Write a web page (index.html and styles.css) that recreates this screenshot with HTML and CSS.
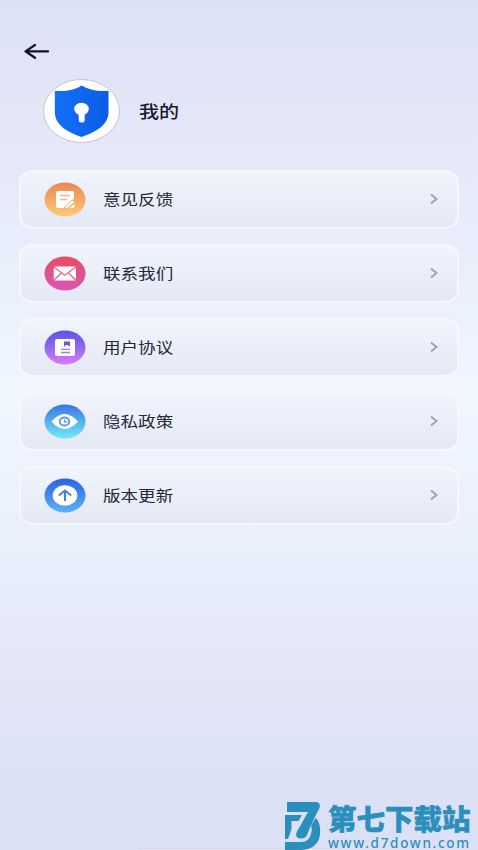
FILE: index.html
```html
<!DOCTYPE html>
<html lang="zh-CN">
<head>
<meta charset="utf-8">
<title>我的</title>
<link rel="stylesheet" href="styles.css">
</head>
<body>
<main class="screen">
  <header class="topbar">
    <svg class="back" width="28" height="18" viewBox="0 0 28 18"><path d="M26 9.4H4M13 3L3.5 9.4L13 15.8" fill="none" stroke="#101328" stroke-width="2.3" stroke-linecap="round" stroke-linejoin="round"/></svg>
  </header>
  <section class="profile">
    <svg class="avatar" width="78" height="65" viewBox="0 0 78 65">
      <defs><linearGradient id="shield" x2="1" y2="0"><stop offset="0" stop-color="#126ff8"/><stop offset="1" stop-color="#0c5de5"/></linearGradient></defs>
      <ellipse cx="38.5" cy="33" rx="38" ry="31.5" fill="#fff" stroke="#c5c7d0"/>
      <path d="M38.5 7.5C31 12.5 22 13.5 11.8 12.7V34C12 47 24 54 38.5 59C53 54 65.5 47 65.5 34V12.7C56 13.5 47 12.5 38.5 7.5Z" fill="url(#shield)"/>
      <ellipse cx="38.5" cy="31" rx="7.3" ry="6.2" fill="#fff"/>
      <rect x="35.7" y="33" width="6" height="11.5" rx="2.5" fill="#fff"/>
    </svg>
    <h1 class="name">我的</h1>
  </section>
  <nav class="menu">
    <a class="item">
      <svg class="icon" width="42" height="35" viewBox="0 0 42 35">
        <defs><linearGradient id="g1" x2="0" y2="1"><stop stop-color="#ec8850"/><stop offset="1" stop-color="#fbca79"/></linearGradient></defs>
        <ellipse cx="21" cy="17.5" rx="20.5" ry="17" fill="url(#g1)"/>
        <path d="M14 9H28Q30 9 30 11V16.5L20 26H14Q12 26 12 24V11Q12 9 14 9Z" fill="#fff"/>
        <path d="M16 13.5H26M16 17.5H23" stroke="#f5b486" stroke-width="1.3"/>
        <path d="M20.5 24.8L28 18L30.8 20L23.5 26.2H20.5Z" fill="#fff" stroke="#f5ae68" stroke-width=".9"/>
        <path d="M25.2 26.2L30.5 21.8V24.2Q30.5 26.2 28.5 26.2Z" fill="#fff"/>
      </svg>
      <span class="label">意见反馈</span>
      <svg class="chevron" width="10" height="14" viewBox="0 0 10 14"><path d="M2 2.5L7.5 7L2 11.5" /></svg>
    </a>
    <a class="item">
      <svg class="icon" width="42" height="35" viewBox="0 0 42 35">
        <defs><linearGradient id="g2" x2="0" y2="1"><stop stop-color="#e64e60"/><stop offset="1" stop-color="#da55b8"/></linearGradient></defs>
        <ellipse cx="21" cy="17.5" rx="20.5" ry="17" fill="url(#g2)"/>
        <rect x="9.7" y="10.5" width="22.3" height="14" rx="1.5" fill="#fff"/>
        <path d="M10 11L20.8 19.4L31.7 11M10 24L17.3 17M31.7 24L24.4 17" fill="none" stroke="#dc607f" stroke-width="1.1"/>
      </svg>
      <span class="label">联系我们</span>
      <svg class="chevron" width="10" height="14" viewBox="0 0 10 14"><path d="M2 2.5L7.5 7L2 11.5" /></svg>
    </a>
    <a class="item">
      <svg class="icon" width="42" height="35" viewBox="0 0 42 35">
        <defs><linearGradient id="g3" x2="0" y2="1"><stop stop-color="#5954e6"/><stop offset=".5" stop-color="#9169ef"/><stop offset="1" stop-color="#dd7bf7"/></linearGradient></defs>
        <ellipse cx="21" cy="17.5" rx="20.5" ry="17" fill="url(#g3)"/>
        <rect x="11" y="9" width="20" height="17" rx="2" fill="#fff"/>
        <path d="M20 11.5H26V16.5L23 14.8L20 16.5Z" fill="#6857d8"/>
        <path d="M17 19.3H26M17 22.5H26" stroke="#a77ce9" stroke-width="1.3"/>
      </svg>
      <span class="label">用户协议</span>
      <svg class="chevron" width="10" height="14" viewBox="0 0 10 14"><path d="M2 2.5L7.5 7L2 11.5" /></svg>
    </a>
    <a class="item">
      <svg class="icon" width="42" height="35" viewBox="0 0 42 35">
        <defs><linearGradient id="g4" x2="0" y2="1"><stop stop-color="#3b75e2"/><stop offset="1" stop-color="#72e9fa"/></linearGradient></defs>
        <ellipse cx="21" cy="17.5" rx="20.5" ry="17" fill="url(#g4)"/>
        <path d="M7.5 17.5Q14 10 20.5 10Q27.5 10 34 17.5Q27.5 25 20.5 25Q14 25 7.5 17.5Z" fill="#fff"/>
        <ellipse cx="20.5" cy="17.5" rx="4.8" ry="4" fill="#fff" stroke="#4f9cdb" stroke-width="1.8"/>
        <path d="M20.5 15.5V17.8H23.5" fill="none" stroke="#4f9cdb" stroke-width="1.2"/>
      </svg>
      <span class="label">隐私政策</span>
      <svg class="chevron" width="10" height="14" viewBox="0 0 10 14"><path d="M2 2.5L7.5 7L2 11.5" /></svg>
    </a>
    <a class="item">
      <svg class="icon" width="42" height="35" viewBox="0 0 42 35">
        <defs><linearGradient id="g5" x2="0" y2="1"><stop stop-color="#2864e4"/><stop offset="1" stop-color="#5bb2f8"/></linearGradient></defs>
        <ellipse cx="21" cy="17.5" rx="20.5" ry="17" fill="url(#g5)"/>
        <ellipse cx="21" cy="17.5" rx="12.3" ry="10.2" fill="#fff"/>
        <path d="M21 23V12.8M14.8 17.5L21 12.5L27.2 17.5" fill="none" stroke="#437fd9" stroke-width="2"/>
      </svg>
      <span class="label">版本更新</span>
      <svg class="chevron" width="10" height="14" viewBox="0 0 10 14"><path d="M2 2.5L7.5 7L2 11.5" /></svg>
    </a>
  </nav>
  <div class="home-strip"></div>
  <aside class="watermark">
    <svg class="mark" width="36" height="49" viewBox="0 0 36 49">
      <path d="M2 1H31Q36 1 34.5 7C31 14 26 23 22.5 33Q20 39 13 37C10 35 11 31 14 27L23 11H2Z" fill="#2b8fbe"/>
      <path d="M0 14H17L13.5 20H6.5V28L3 38H0Z" fill="#2b8fbe"/>
      <path d="M30.5 17C36 21 36 33 34 38C31 45 25 49 16 49H0V41H16C21 41 25 38 26 33C27 29 27 27 26 25Z" fill="#2b8fbe"/>
    </svg>
    <div class="brand">
      <span class="brand-name">第七下载站</span>
      <span class="brand-url">www.d7down.com</span>
    </div>
  </aside>
</main>
</body>
</html>
```
FILE: styles.css
```css
* { box-sizing: border-box; }

body {
  margin: 0;
  font-family: "Noto Sans CJK SC", sans-serif;
  color: #25283a;
}

.screen {
  position: relative;
  height: 850px;
  overflow: hidden;
  padding: 42px 19px 0;
  background: linear-gradient(180deg, #dde1f5 0, #e4e8f8 150px, #eaf0fc 290px, #f0f7ff 395px, #eaf0fc 530px, #e3e7f7 660px, #dce1f5 780px, #dbe0f4 850px);
}

.topbar {
  height: 36px;
  padding-left: 3px;
}

.back, .avatar, .icon, .chevron, .mark { display: block; flex: none; }

.profile {
  display: flex;
  align-items: center;
  height: 65px;
  padding-left: 24px;
}

.name {
  margin: 1px 0 0 18px;
  font-size: 17px;
  line-height: 24px;
  font-weight: 500;
  color: #181b2c;
  transform: scaleX(1.18);
  transform-origin: left;
}

.menu {
  display: flex;
  flex-direction: column;
  gap: 15px;
  margin-top: 27px;
}

.item {
  display: flex;
  align-items: center;
  height: 59px;
  padding: 0 18px 1px 23px;
  border: 2px solid #f5f9ff;
  border-radius: 14px / 12px;
  background: linear-gradient(180deg, #f0f4fd, #e4e9f5);
}

.label {
  flex: 1;
  margin-left: 17px;
  font-size: 15px;
  line-height: 22px;
  transform: scaleX(1.17);
  transform-origin: left;
}

.chevron path {
  fill: none;
  stroke: #a0a3af;
  stroke-width: 1.9;
}

.home-strip {
  position: absolute;
  left: 140px;
  bottom: 0;
  width: 200px;
  height: 2px;
  border-radius: 4px 4px 0 0;
  background: #e8eaf5;
  border-top: 1px solid #d5d9e9;
}

.watermark {
  position: absolute;
  left: 285px;
  top: 801px;
  display: flex;
  gap: 7px;
  color: #2b8fbe;
}

.brand {
  display: flex;
  flex-direction: column;
  white-space: nowrap;
}

.brand-name {
  height: 35px;
  font-size: 28.5px;
  line-height: 34px;
  font-weight: 900;
  -webkit-text-stroke: .5px #2b8fbe;
}

.brand-url {
  font-family: "Noto Sans", sans-serif;
  font-size: 13.5px;
  line-height: 14px;
  font-weight: 500;
  letter-spacing: 1.7px;
}
```
